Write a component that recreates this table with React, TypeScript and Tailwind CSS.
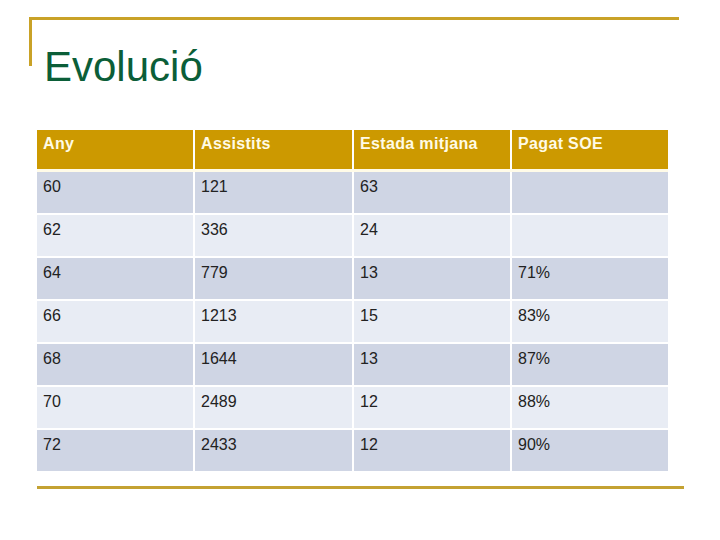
const rows: [string, string, string, string][] = [
  ['60', '121', '63', ''],
  ['62', '336', '24', ''],
  ['64', '779', '13', '71%'],
  ['66', '1213', '15', '83%'],
  ['68', '1644', '13', '87%'],
  ['70', '2489', '12', '88%'],
  ['72', '2433', '12', '90%'],
];

const headers = ['Any', 'Assistits', 'Estada mitjana', 'Pagat SOE'];

export default function App() {
  return (
    <div className="w-[720px] h-[540px] bg-white overflow-hidden font-['Liberation_Sans',Arial,sans-serif]">
      <div className="pt-[17px] pl-[29px]">
        <div className="w-[650px] h-[49px] border-t-[3px] border-l-[3px] border-[#c9a227]">
          <h1 className="pt-[26px] pl-[12px] text-[42px] leading-none text-[#0b5e38] whitespace-nowrap">
            Evolució
          </h1>
        </div>
      </div>

      <div className="ml-[37px] mt-[64px] w-[631px]">
        <div className="grid grid-cols-[156px_157px_156px_156px] gap-x-[2px] border-b-[3px] border-[#fffbe8]">
          {headers.map((h) => (
            <div
              key={h}
              className="h-[39px] bg-[#cc9900] px-[6px] pt-[4px] text-[16px] leading-[20px] font-bold tracking-[0.35px] text-[#fffbe6]"
            >
              {h}
            </div>
          ))}
        </div>
        <div className="flex flex-col gap-y-[2px]">
          {rows.map((r, i) => (
            <div key={r[0]} className="grid grid-cols-[156px_157px_156px_156px] gap-x-[2px]">
              {r.map((c, j) => (
                <div
                  key={j}
                  className={`h-[41px] px-[6px] pt-[5px] text-[16px] leading-[20px] text-[#222222] ${
                    i % 2 === 0 ? 'bg-[#cfd5e4]' : 'bg-[#e8ecf4]'
                  }`}
                >
                  {c}
                </div>
              ))}
            </div>
          ))}
        </div>
      </div>

      <div className="ml-[37px] mt-[15px] w-[647px] h-[3px] bg-[#c4a232]" />
    </div>
  );
}
